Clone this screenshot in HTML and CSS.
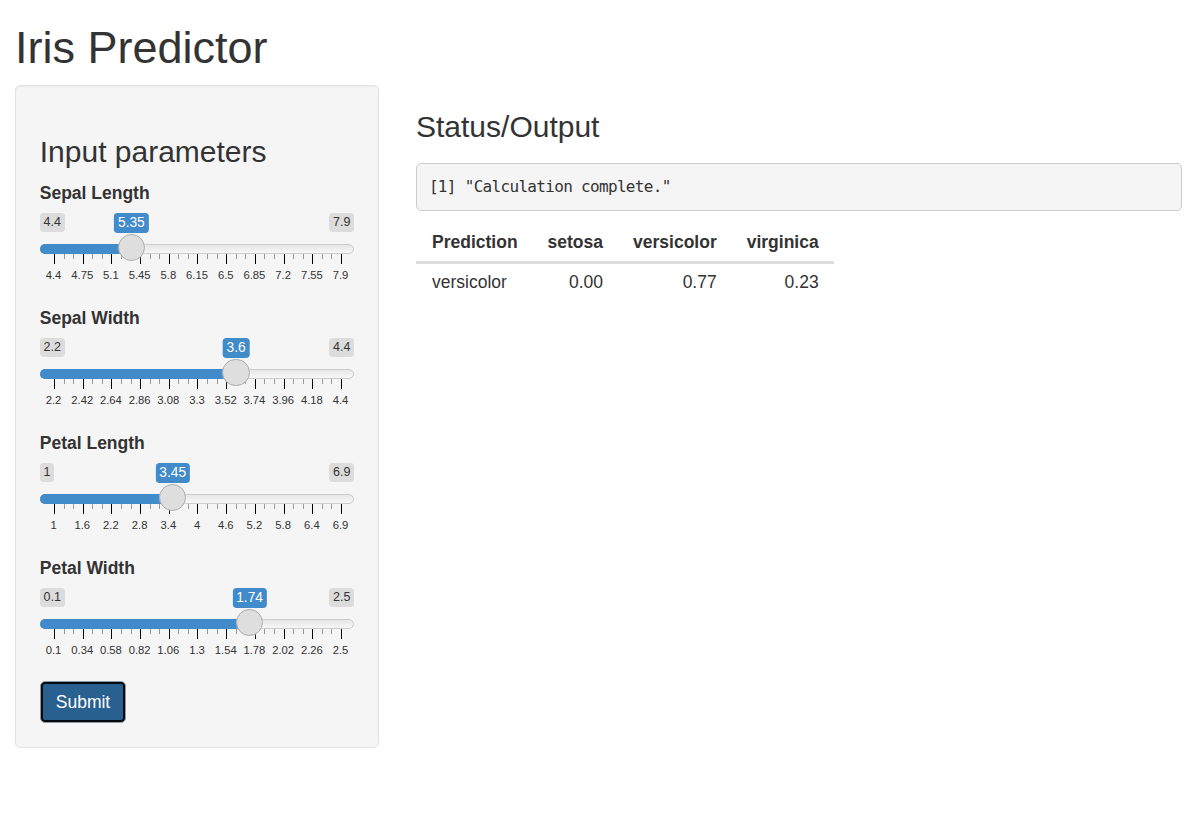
FILE: index.html
```html
<!DOCTYPE html>
<html lang="en">
<head>
<meta charset="utf-8">
<title>Iris Predictor</title>
<link rel="stylesheet" href="styles.css">
</head>
<body>
<div class="page">
  <h1 class="title">Iris Predictor</h1>
  <div class="row">
    <form class="well">
      <h3 class="section-title">Input parameters</h3>

      <div class="form-group">
        <label class="control-label">Sepal Length</label>
        <div class="irs" style="--p:0.271429">
          <span class="irs-line"></span>
          <span class="irs-bar"></span>
          <div class="irs-grid">
            <div class="grid-labels"><span>4.4</span><span>4.75</span><span>5.1</span><span>5.45</span><span>5.8</span><span>6.15</span><span>6.5</span><span>6.85</span><span>7.2</span><span>7.55</span><span>7.9</span></div>
          </div>
          <span class="irs-min">4.4</span>
          <span class="irs-max">7.9</span>
          <span class="irs-single">5.35</span>
          <span class="irs-handle"></span>
        </div>
      </div>

      <div class="form-group">
        <label class="control-label">Sepal Width</label>
        <div class="irs" style="--p:0.636364">
          <span class="irs-line"></span>
          <span class="irs-bar"></span>
          <div class="irs-grid">
            <div class="grid-labels"><span>2.2</span><span>2.42</span><span>2.64</span><span>2.86</span><span>3.08</span><span>3.3</span><span>3.52</span><span>3.74</span><span>3.96</span><span>4.18</span><span>4.4</span></div>
          </div>
          <span class="irs-min">2.2</span>
          <span class="irs-max">4.4</span>
          <span class="irs-single">3.6</span>
          <span class="irs-handle"></span>
        </div>
      </div>

      <div class="form-group">
        <label class="control-label">Petal Length</label>
        <div class="irs" style="--p:0.415254">
          <span class="irs-line"></span>
          <span class="irs-bar"></span>
          <div class="irs-grid">
            <div class="grid-labels"><span>1</span><span>1.6</span><span>2.2</span><span>2.8</span><span>3.4</span><span>4</span><span>4.6</span><span>5.2</span><span>5.8</span><span>6.4</span><span>6.9</span></div>
          </div>
          <span class="irs-min">1</span>
          <span class="irs-max">6.9</span>
          <span class="irs-single">3.45</span>
          <span class="irs-handle"></span>
        </div>
      </div>

      <div class="form-group">
        <label class="control-label">Petal Width</label>
        <div class="irs" style="--p:0.683333">
          <span class="irs-line"></span>
          <span class="irs-bar"></span>
          <div class="irs-grid">
            <div class="grid-labels"><span>0.1</span><span>0.34</span><span>0.58</span><span>0.82</span><span>1.06</span><span>1.3</span><span>1.54</span><span>1.78</span><span>2.02</span><span>2.26</span><span>2.5</span></div>
          </div>
          <span class="irs-min">0.1</span>
          <span class="irs-max">2.5</span>
          <span class="irs-single">1.74</span>
          <span class="irs-handle"></span>
        </div>
      </div>

      <button type="button" class="btn-submit">Submit</button>
    </form>

    <div class="main">
      <h3 class="main-title">Status/Output</h3>
      <pre class="output">[1] "Calculation complete."</pre>
      <table class="result-table">
        <thead>
          <tr><th>Prediction</th><th class="num">setosa</th><th class="num">versicolor</th><th class="num">virginica</th></tr>
        </thead>
        <tbody>
          <tr><td>versicolor</td><td class="num">0.00</td><td class="num">0.77</td><td class="num">0.23</td></tr>
        </tbody>
      </table>
    </div>
  </div>
</div>
</body>
</html>
```

FILE: styles.css
```css
* {
  box-sizing: border-box;
}

html,
body {
  margin: 0;
  padding: 0;
}

body {
  font-family: "Liberation Sans", Arial, Helvetica, sans-serif;
  font-size: 17.5px;
  line-height: 1.42857;
  color: #333;
  background: #fff;
}

.page {
  padding: 0 15px;
}

.title {
  font-size: 45px;
  font-weight: 400;
  line-height: 1.1;
  margin: 23px 0 12.5px;
}

.row {
  display: flex;
  align-items: flex-start;
  gap: 37px;
}

/* Sidebar */
.well {
  flex: none;
  width: 364px;
  margin: 0;
  padding: 23.75px;
  background: #f5f5f5;
  border: 1px solid #e3e3e3;
  border-radius: 5px;
  box-shadow: inset 0 1px 1px rgba(0, 0, 0, 0.05);
}

.section-title {
  font-size: 30px;
  font-weight: 400;
  line-height: 1.1;
  margin: 25px 0 13.5px;
}

.form-group {
  margin-bottom: 18.75px;
}

.control-label {
  display: block;
  font-weight: 700;
  line-height: 25px;
  margin-bottom: 6.25px;
}

/* Range slider */
.irs {
  position: relative;
  display: block;
  height: 75px;
  font-family: "Liberation Sans", Arial, sans-serif;
}

.irs-line {
  position: absolute;
  left: 0;
  right: 0;
  top: 31.25px;
  height: 10px;
  border: 1px solid #ccc;
  border-radius: 10px;
  background-color: #ededed;
  background-image: linear-gradient(to bottom, #dedede -50%, #fff 150%);
}

.irs-bar {
  position: absolute;
  left: 0;
  top: 31.25px;
  height: 10px;
  width: calc(13.75px + (100% - 27.5px) * var(--p));
  background: #428bca;
  border-top: 1px solid #428bca;
  border-bottom: 1px solid #428bca;
  border-radius: 10px 0 0 10px;
}

.irs-grid {
  position: absolute;
  left: 13.75px;
  right: 13.75px;
  bottom: 0;
  height: 33.75px;
}

.irs-grid::before {
  content: "";
  position: absolute;
  left: 0;
  top: 0;
  width: calc(100% + 1px);
  height: 10px;
  background:
    repeating-linear-gradient(to right, #000 0 1px, transparent 1px calc((100% - 1px) / 10)) 0 0 / 100% 10px no-repeat,
    repeating-linear-gradient(to right, #999 0 1px, transparent 1px calc((100% - 1px) / 30)) 0 0 / 100% 5px no-repeat;
}

.grid-labels {
  position: absolute;
  left: -5%;
  width: 110%;
  bottom: 6.25px;
  display: flex;
  font-size: 11.25px;
  line-height: 11.25px;
  color: #333;
}

.grid-labels span {
  flex: 1 1 0;
  text-align: center;
  white-space: nowrap;
}

.irs-min,
.irs-max {
  position: absolute;
  top: 0;
  padding: 1.25px 3.75px;
  font-size: 12.5px;
  line-height: 16.67px;
  color: #333;
  background: rgba(0, 0, 0, 0.1);
  border-radius: 3.75px;
}

.irs-min {
  left: 0;
}

.irs-max {
  right: 0;
}

.irs-single {
  position: absolute;
  top: 0;
  left: calc(13.75px + (100% - 27.5px) * var(--p));
  transform: translateX(-50%);
  padding: 1.25px 3.75px;
  font-size: 13.75px;
  line-height: 18.33px;
  color: #fff;
  background: #428bca;
  border-radius: 3.75px;
  white-space: nowrap;
}

.irs-handle {
  position: absolute;
  top: 21.25px;
  left: calc((100% - 27.5px) * var(--p));
  width: 27.5px;
  height: 27.5px;
  border: 1px solid #ababab;
  background: #dedede;
  border-radius: 50%;
  box-shadow: 1px 1px 3px rgba(255, 255, 255, 0.3);
}

/* Button */
.btn-submit {
  display: inline-block;
  font-family: inherit;
  font-size: 17.5px;
  line-height: 25px;
  padding: 7.5px 15px;
  color: #fff;
  background: #286090;
  border: 1px solid #8d9aa6;
  border-radius: 5px;
  box-shadow: inset 0 0 0 2px #050a10;
  cursor: pointer;
}

/* Main panel */
.main {
  flex: 1 1 auto;
  min-width: 0;
  margin-right: 1px;
}

.main-title {
  font-size: 30px;
  font-weight: 400;
  line-height: 1.1;
  margin: 25px 0 19.5px;
}

.output {
  margin: 0 0 12.5px;
  padding: 11.875px;
  font-family: "DejaVu Sans Mono", "Liberation Mono", monospace;
  font-size: 16px;
  letter-spacing: -0.68px;
  line-height: 23.2px;
  color: #333;
  background: #f5f5f5;
  border: 1px solid #ccc;
  border-radius: 5px;
  white-space: pre-wrap;
}

.result-table {
  border-collapse: collapse;
  border-spacing: 0;
}

.result-table th,
.result-table td {
  padding: 6px 15px;
  line-height: 25px;
  text-align: left;
}

.result-table th:first-child,
.result-table td:first-child {
  padding-left: 16px;
}

.result-table th {
  font-weight: 700;
  border-bottom: 3px solid #ddd;
  vertical-align: bottom;
}

.result-table .num {
  text-align: right;
}
```
